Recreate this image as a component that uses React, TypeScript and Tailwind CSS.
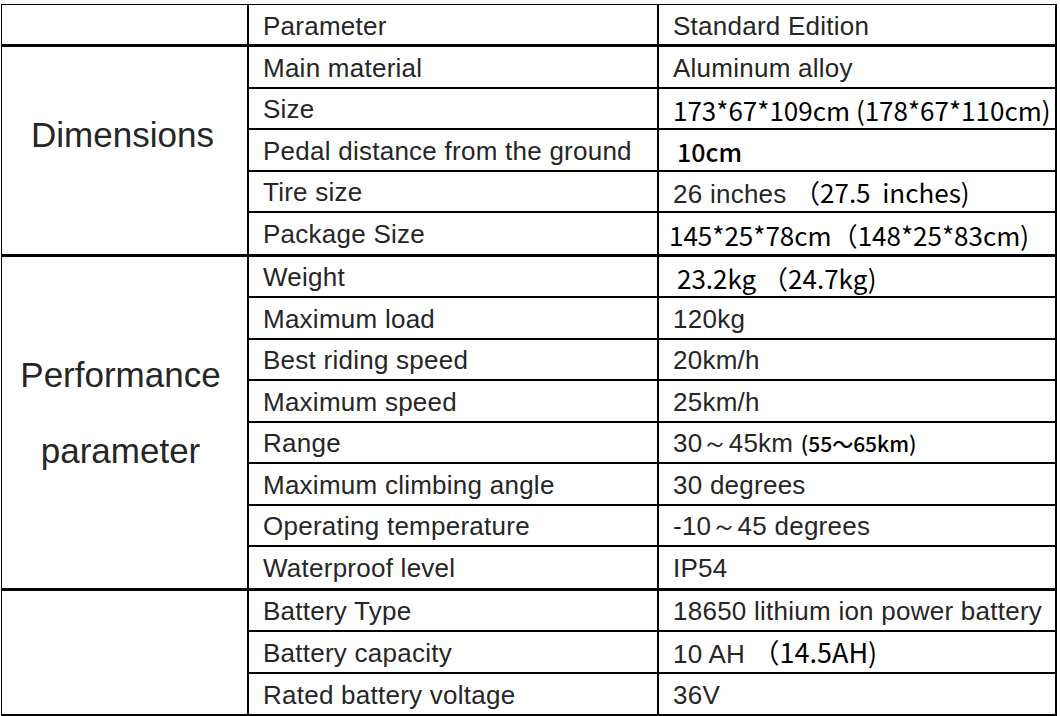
import React from "react";

type Row = { name: string; value: React.ReactNode; pad?: string };

const cjk = "font-['Noto_Sans_CJK_SC',sans-serif] tracking-normal text-black";
const dark = `${cjk} font-normal`;
const darkBold = `${cjk} font-medium`;

const groups: { label: React.ReactNode; rows: Row[] }[] = [
  {
    label: (
      <div className="pt-[66px] pr-[4px] text-center text-[35px] leading-[44px]">
        Dimensions
      </div>
    ),
    rows: [
      { name: "Main material", value: "Aluminum alloy" },
      {
        name: "Size",
        value: <span className={`${dark} text-[26px]`}>173*67*109cm (178*67*110cm)</span>,
      },
      {
        name: "Pedal distance from the ground",
        value: <span className={`${darkBold} text-[25px]`}>10cm</span>,
        pad: "pl-[18px]",
      },
      {
        name: "Tire size",
        value: (
          <span className="whitespace-pre">
            26 inches <span className={`${dark} text-[26px]`}>（27.5  inches)</span>
          </span>
        ),
      },
      {
        name: "Package Size",
        value: <span className={`${dark} text-[26px]`}>145*25*78cm（148*25*83cm)</span>,
        pad: "pl-[10px]",
      },
    ],
  },
  {
    label: (
      <div className="pt-[80px] pr-[8px] text-center text-[35px] leading-[76px]">
        Performance
        <br />
        parameter
      </div>
    ),
    rows: [
      {
        name: "Weight",
        value: <span className={`${dark} text-[26px] tracking-[0.3px]`}>23.2kg （24.7kg)</span>,
        pad: "pl-[18px]",
      },
      { name: "Maximum load", value: "120kg" },
      { name: "Best riding speed", value: "20km/h" },
      { name: "Maximum speed", value: "25km/h" },
      {
        name: "Range",
        value: (
          <span>
            30～45km <span className={`${darkBold} text-[21px]`}>(55～65km)</span>
          </span>
        ),
      },
      { name: "Maximum climbing angle", value: "30 degrees" },
      { name: "Operating temperature", value: "-10～45 degrees" },
      { name: "Waterproof level", value: "IP54" },
    ],
  },
  {
    label: null,
    rows: [
      { name: "Battery Type", value: "18650 lithium ion power battery" },
      {
        name: "Battery capacity",
        value: (
          <span className="whitespace-pre">
            10 AH <span className={`${dark} text-[27px] text-[#10121c]`}>（14.5AH)</span>
          </span>
        ),
      },
      { name: "Rated battery voltage", value: "36V" },
    ],
  },
];

export default function App() {
  return (
    <div className="w-[1060px] h-[716px] overflow-hidden bg-white pt-[4px] pl-[1px] font-['Liberation_Sans',sans-serif] text-[26px] tracking-[0.25px] text-[#262626]">
      <div className="w-[1056px] border-t border-l border-r-2 border-black">
        <div className="flex h-[42px] border-b-[3px] border-black">
          <div className="w-[247px] border-r-2 border-black" />
          <div className="flex w-[410px] items-center border-r-2 border-black pl-[14px] pt-[3px]">
            Parameter
          </div>
          <div className="flex flex-1 items-center pl-[14px] pt-[3px]">Standard Edition</div>
        </div>

        {groups.map((g, gi) => (
          <div
            key={gi}
            className={`flex border-black ${gi === groups.length - 1 ? "border-b-2" : "border-b-[3px]"}`}
          >
            <div className="w-[247px] shrink-0 border-r-2 border-black tracking-normal">{g.label}</div>
            <div className="flex flex-1 flex-col">
              {g.rows.map((r, ri) => {
                const last = ri === g.rows.length - 1;
                return (
                  <div
                    key={r.name}
                    className={`flex ${last ? "h-[40.5px]" : "h-[41.5px] border-b-2 border-black"}`}
                  >
                    <div className="flex w-[410px] items-center border-r-2 border-black pl-[14px] pt-[3px] whitespace-nowrap">
                      {r.name}
                    </div>
                    <div
                      className={`flex flex-1 items-center pt-[3px] whitespace-nowrap ${r.pad ?? "pl-[14px]"}`}
                    >
                      {r.value}
                    </div>
                  </div>
                );
              })}
            </div>
          </div>
        ))}
      </div>
    </div>
  );
}
